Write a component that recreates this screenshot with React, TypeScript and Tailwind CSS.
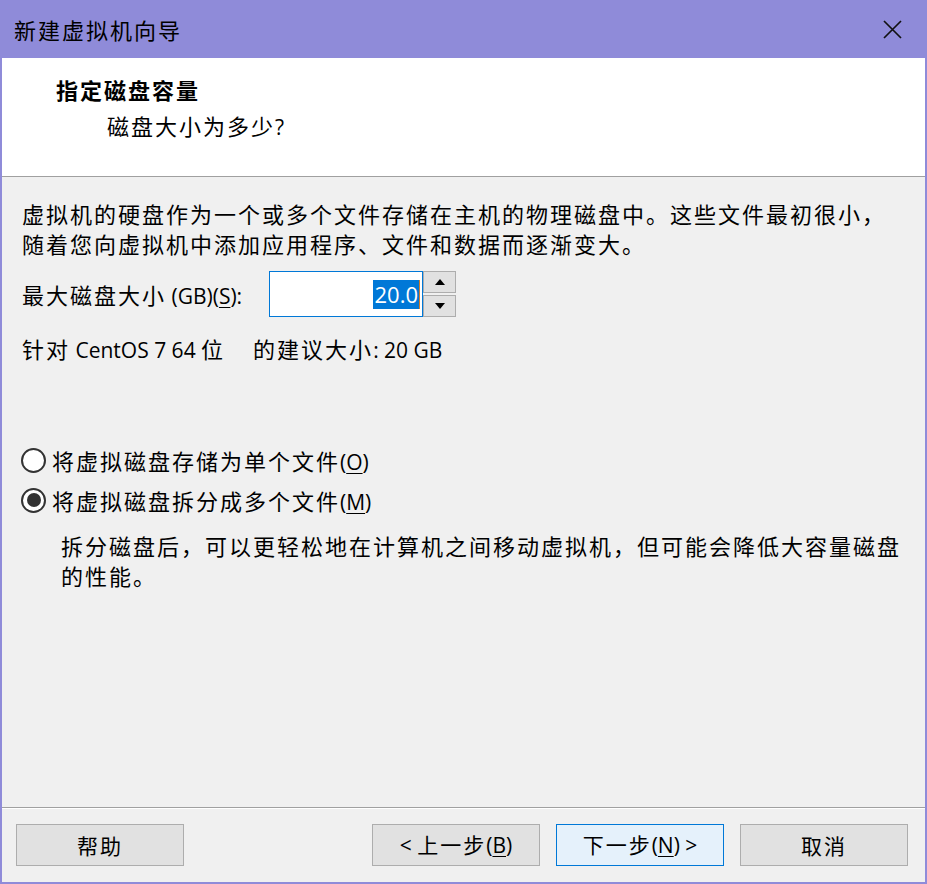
import React from "react";

const L = ({ children }: { children: React.ReactNode }) => (
  <span className="font-['Open_Sans'] text-[21px] tracking-normal leading-none">{children}</span>
);

const U = ({ children }: { children: React.ReactNode }) => (
  <span className="underline underline-offset-[3px] decoration-1">{children}</span>
);

const Radio = ({ checked }: { checked?: boolean }) => (
  <span className="w-[25px] h-[25px] rounded-full border-2 border-[#333] bg-white flex items-center justify-center shrink-0">
    {checked && <span className="w-[14px] h-[14px] rounded-full bg-[#333]" />}
  </span>
);

const Btn = ({ children, primary }: { children: React.ReactNode; primary?: boolean }) => (
  <button
    className={
      primary
        ? "w-[168px] h-[42px] border border-[#0078d7] bg-[#e5f1fb] text-[21px] tracking-[2px] leading-none flex items-center justify-center"
        : "w-[168px] h-[42px] border border-[#adadad] bg-[#e1e1e1] text-[21px] tracking-[2px] leading-none flex items-center justify-center"
    }
  >
    <span>{children}</span>
  </button>
);

export default function App() {
  return (
    <div className="w-[927px] h-[884px] bg-[#8f8bd9] flex flex-col font-['Noto_Sans_CJK_SC',sans-serif] text-black">
      {/* title bar */}
      <div className="h-[58px] flex items-center justify-between pl-[14px] pr-[25px]">
        <span className="text-[22px] tracking-[2px]">新建虚拟机向导</span>
        <svg width="19" height="19" viewBox="0 0 19 19">
          <path d="M1 1 L18 18 M18 1 L1 18" stroke="#111" strokeWidth="1.7" fill="none" />
        </svg>
      </div>

      <div className="flex-1 mx-[2px] mb-[2px] bg-[#f0f0f0] flex flex-col">
        {/* header */}
        <div className="h-[119px] bg-white border-b border-[#a0a0a0] pt-[16px]">
          <div className="pl-[54px] h-[30px] text-[22px] tracking-[2px] font-bold leading-[30px]">指定磁盘容量</div>
          <div className="pl-[105px] mt-[6px] h-[30px] text-[22px] tracking-[2px] leading-[30px]">
            磁盘大小为多少<L>?</L>
          </div>
        </div>

        {/* body */}
        <div className="flex-1 pl-[20px] pr-[20px] pt-[21px] text-[22px] tracking-[2px] leading-[30px]">
          <p className="h-[60px]">
            虚拟机的硬盘作为一个或多个文件存储在主机的物理磁盘中。这些文件最初很小，
            <br />
            随着您向虚拟机中添加应用程序、文件和数据而逐渐变大。
          </p>

          <div className="flex items-center mt-[13px] h-[46px]">
            <div className="w-[247px] h-[30px]">
              最大磁盘大小
              <L>
                {" "}(GB)(<U>S</U>):
              </L>
            </div>
            <div className="w-[154px] h-[46px] border border-[#0078d7] bg-white flex items-center justify-end pr-[2px]">
              <span className="font-['Open_Sans'] text-[22px] tracking-normal leading-[29px] bg-[#0078d7] text-white px-[1px]">
                20.0
              </span>
              <span className="w-[1px] h-[29px] bg-[#d07a2a]" />
            </div>
            <div className="w-[33px] h-[46px] flex flex-col gap-[2px]">
              <div className="flex-1 border border-[#adadad] bg-[#e1e1e1] flex items-center justify-center">
                <svg width="10" height="6" viewBox="0 0 10 6">
                  <path d="M5 0 L10 6 L0 6 Z" fill="#000" />
                </svg>
              </div>
              <div className="flex-1 border border-[#adadad] bg-[#e1e1e1] flex items-center justify-center">
                <svg width="10" height="6" viewBox="0 0 10 6">
                  <path d="M0 0 L10 0 L5 6 Z" fill="#000" />
                </svg>
              </div>
            </div>
          </div>

          <div className="mt-[16px] h-[30px]">
            针对<L> CentOS 7 64 </L>位<span className="inline-block w-[28px]" />的建议大小<L>: 20 GB</L>
          </div>

          <div className="flex items-center gap-[6px] mt-[82px] h-[30px] -ml-[1px]">
            <Radio />
            <span>
              将虚拟磁盘存储为单个文件
              <L>
                (<U>O</U>)
              </L>
            </span>
          </div>
          <div className="flex items-center gap-[6px] mt-[10px] h-[30px] -ml-[1px]">
            <Radio checked />
            <span>
              将虚拟磁盘拆分成多个文件
              <L>
                (<U>M</U>)
              </L>
            </span>
          </div>
          <p className="pl-[39px] mt-[15px]">
            拆分磁盘后，可以更轻松地在计算机之间移动虚拟机，但可能会降低大容量磁盘
            <br />
            的性能。
          </p>
        </div>

        {/* footer */}
        <div className="border-t border-[#a0a0a0]">
          <div className="h-px bg-white" />
          <div className="flex justify-between pl-[14px] pr-[17px] pt-[15px] pb-[16px]">
            <Btn>帮助</Btn>
            <div className="flex gap-[16px]">
              <Btn>
                <L>&lt;&nbsp;</L>上一步
                <L>
                  (<U>B</U>)
                </L>
              </Btn>
              <Btn primary>
                下一步
                <L>
                  (<U>N</U>)&nbsp;&gt;
                </L>
              </Btn>
              <Btn>取消</Btn>
            </div>
          </div>
        </div>
      </div>
    </div>
  );
}
